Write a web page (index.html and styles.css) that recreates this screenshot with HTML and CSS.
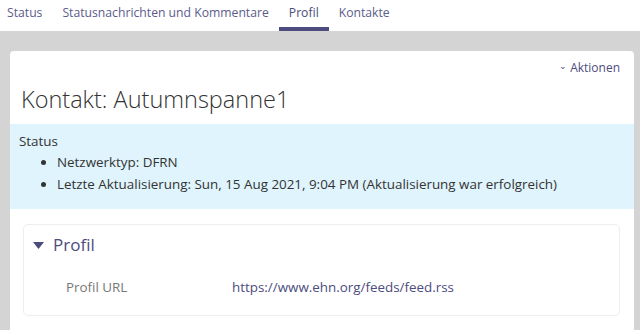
FILE: index.html
```html
<!DOCTYPE html>
<html lang="de">
<head>
    <meta charset="UTF-8">
    <title>Kontakt: Autumnspanne1</title>
    <link rel="stylesheet" href="styles.css">
</head>
<body>
    <nav class="tabbar">
        <ul class="tabs">
            <li><a href="#">Status</a></li>
            <li><a href="#">Statusnachrichten und Kommentare</a></li>
            <li class="active"><a href="#">Profil</a></li>
            <li><a href="#">Kontakte</a></li>
        </ul>
    </nav>

    <main class="card">
        <div class="card-top">
            <a class="actions" href="#"><span class="caret">&#8964;</span>Aktionen</a>
        </div>
        <h2 class="title">Kontakt: Autumnspanne1</h2>

        <div class="status-box">
            <div class="status-label">Status</div>
            <ul class="status-list">
                <li>Netzwerktyp: DFRN</li>
                <li>Letzte Aktualisierung: Sun, 15 Aug 2021, 9:04 PM (Aktualisierung war erfolgreich)</li>
            </ul>
        </div>

        <section class="panel">
            <h3 class="panel-title">
                <svg class="toggle" width="11" height="7" viewBox="0 0 11 7"><path d="M0 0 L11 0 L5.5 7 Z" fill="#4c4c7c"/></svg>
                Profil
            </h3>
            <div class="field">
                <span class="field-label">Profil URL</span>
                <a class="field-value" href="#">https://www.ehn.org/feeds/feed.rss</a>
            </div>
        </section>
    </main>
</body>
</html>
```

FILE: styles.css
```css
* {
    margin: 0;
    padding: 0;
    box-sizing: border-box;
}

body {
    font-family: 'Open Sans', 'Noto Sans', sans-serif;
    background: #d4d4d4;
    color: #333;
    height: 330px;
    overflow: hidden;
}

a {
    text-decoration: none;
}

.tabbar {
    background: white;
    height: 31px;
}

.tabs {
    list-style: none;
    display: flex;
    margin-left: -3px;
    height: 31px;
}

.tabs li a {
    display: block;
    height: 31px;
    padding: 4px 10px 0;
    font-size: 12.2px;
    color: #5c5c8a;
    border-bottom: 4px solid transparent;
}

.tabs li.active a {
    border-bottom-color: #4c4c7e;
    color: #4c4c7e;
}

.card {
    background: white;
    margin: 20px 6px 0 10px;
    border-radius: 4px;
    padding-top: 8px;
    height: 300px;
}

.card-top {
    display: flex;
    justify-content: flex-end;
    padding-right: 14px;
}

.actions {
    font-size: 12px;
    color: #4c4c7e;
    display: flex;
    align-items: center;
}

.caret {
    font-size: 9px;
    margin-right: 3px;
    position: relative;
    top: -2px;
}

.title {
    font-weight: 300;
    font-size: 23.5px;
    color: #333;
    padding: 7px 11px 0;
    height: 48px;
}

.status-box {
    background: #dff4fc;
    padding: 7px 9px 0;
    height: 85px;
    font-size: 13.4px;
    color: #333;
}

.status-label {
    line-height: 20px;
}

.status-list {
    padding-left: 38px;
    line-height: 22px;
}

.panel {
    margin: 15px 14px 0 13px;
    border: 1px solid #eee;
    border-radius: 5px;
    height: 92px;
    padding: 8px 9px;
}

.panel-title {
    font-weight: normal;
    font-size: 17px;
    color: #4c4c7e;
    display: flex;
    align-items: center;
    gap: 9px;
}

.toggle {
    margin-top: 2px;
}

.field {
    display: flex;
    margin-top: 22px;
    font-size: 13.4px;
    padding-left: 33px;
}

.field-label {
    color: #777;
    width: 166px;
}

.field-value {
    color: #4c4c7e;
}
```
